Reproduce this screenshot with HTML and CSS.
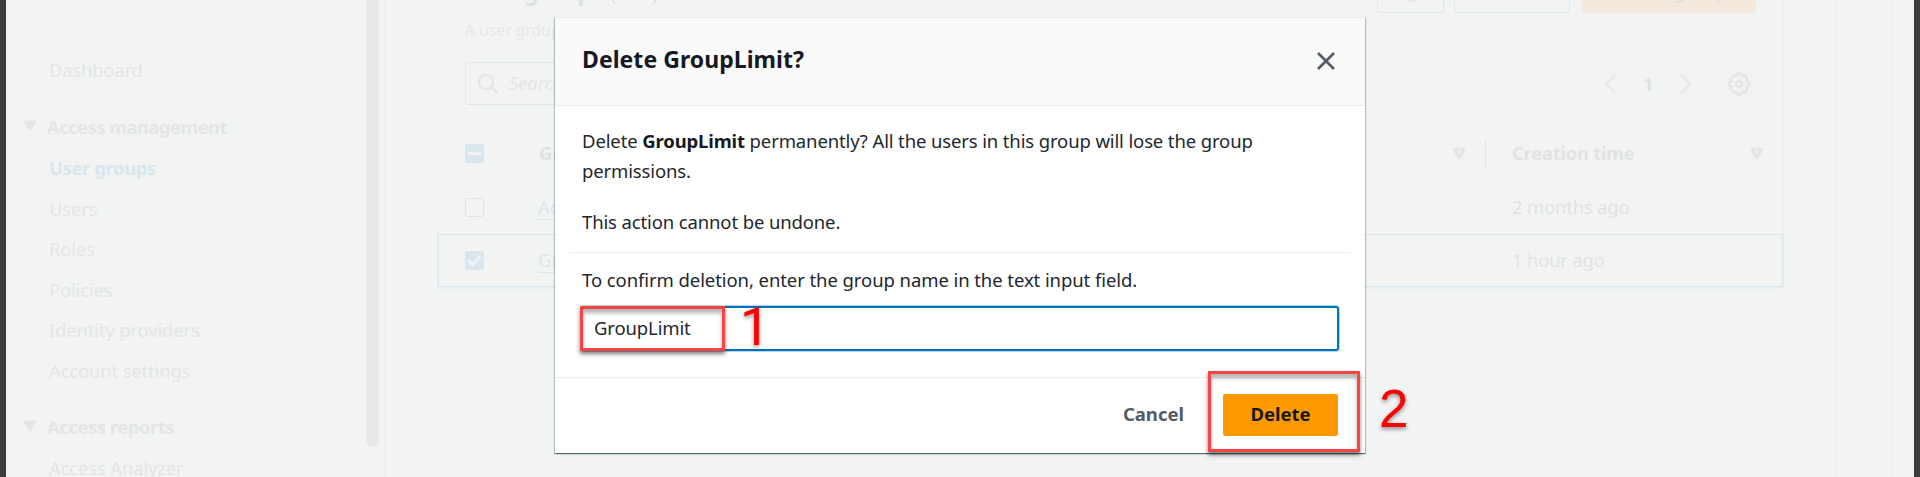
FILE: index.html
```html
<!DOCTYPE html>
<html lang="en">
<head>
<meta charset="utf-8">
<title>Delete GroupLimit?</title>
<link rel="stylesheet" href="styles.css">
</head>
<body>
<div class="app">
  <nav class="sidebar">
    <div class="side-rule"></div>
    <a class="item dash">Dashboard</a>
    <div class="section"><svg width="14" height="12" viewBox="0 0 14 12"><path d="M1.5 1.5h11L7 10z" fill="currentColor" stroke="currentColor" stroke-width="2" stroke-linejoin="round"/></svg><span>Access management</span></div>
    <a class="item active">User groups</a>
    <a class="item">Users</a>
    <a class="item">Roles</a>
    <a class="item">Policies</a>
    <a class="item">Identity providers</a>
    <a class="item">Account settings</a>
    <div class="section second"><svg width="14" height="12" viewBox="0 0 14 12"><path d="M1.5 1.5h11L7 10z" fill="currentColor" stroke="currentColor" stroke-width="2" stroke-linejoin="round"/></svg><span>Access reports</span></div>
    <a class="item">Access Analyzer</a>
  </nav>
  <div class="scroll"><div class="thumb"></div></div>
  <main class="main">
    <section class="card">
      <header class="card-head">
        <div class="card-title">User groups <span>(1/2)</span></div>
        <div class="actions">
          <div class="btn refresh"><svg width="20" height="20" viewBox="0 0 20 20"><circle cx="10" cy="11" r="7" fill="none" stroke="currentColor" stroke-width="3"/></svg></div>
          <div class="btn del">Delete</div>
          <div class="btn create">Create group</div>
        </div>
      </header>
      <div class="desc">A user group is a collection of IAM users.</div>
      <div class="tools">
        <div class="search">
          <svg width="22" height="22" viewBox="0 0 22 22" fill="none" stroke="currentColor" stroke-width="2.6"><circle cx="9" cy="9" r="7.2"/><path d="M14.2 14.2l6 6"/></svg>
          <span>Search</span>
        </div>
        <div class="pager">
          <svg class="chev" width="14" height="22" viewBox="0 0 14 22"><path d="M12 1.5L2.5 11l9.500 9.500" /></svg>
          <b>1</b>
          <svg class="chev" width="14" height="22" viewBox="0 0 14 22"><path d="M2 1.500L11.500 11 2 20.500"/></svg>
          <i class="pager-line"></i>
          <svg class="gear" width="24" height="24" viewBox="0 0 24 24" fill="none" stroke="currentColor" stroke-width="2.800" stroke-linejoin="round"><path d="M10 2h4l1 2.300 2.600-.6 2.600 2.800-.8 2.500 2.400 1.300v3.400l-2.400 1.300.8 2.500-2.600 2.800-2.600-.6-1 2.300h-4l-1-2.300-2.600.6-2.600-2.800.8-2.500-2.400-1.300v-3.400l2.400-1.300-.8-2.500 2.600-2.800 2.600.6z"/><circle cx="12" cy="12" r="3"/></svg>
        </div>
      </div>
      <div class="row thead">
        <div class="c-check"><i class="box on"><svg width="19" height="19"><path d="M3 9.500h13" stroke="#f2f4f3" stroke-width="3"/></svg></i></div>
        <div class="c-name"><span>Group name</span><svg class="sort" width="14" height="13" viewBox="0 0 14 13"><path d="M2 2h10L7 10.500z"/></svg></div>
        <div class="c-time"><span>Creation time</span><svg class="sort" width="14" height="13" viewBox="0 0 14 13"><path d="M2 2h10L7 10.500z"/></svg></div>
      </div>
      <div class="row">
        <div class="c-check"><i class="box"></i></div>
        <div class="c-name"><a>Admins</a></div>
        <div class="c-time"><span>2 months ago</span></div>
      </div>
      <div class="row selected">
        <div class="c-check"><i class="box on"><svg width="19" height="19"><path d="M3.500 9.500l4.300 4.500L15.500 4.500" fill="none" stroke="#f2f4f3" stroke-width="2.800"/></svg></i></div>
        <div class="c-name"><a>GroupLimit</a></div>
        <div class="c-time"><span>1 hour ago</span></div>
      </div>
    </section>
  </main>
  <div class="help"></div>
  <div class="rail"></div>
</div>

<div class="modal">
  <header class="m-head"><h2>Delete GroupLimit?</h2>
    <svg width="20" height="20" viewBox="0 0 20 20"><path d="M2 2l16 16M18 2L2 18" stroke="#545b64" stroke-width="2.600"/></svg>
  </header>
  <div class="m-body">
    <p>Delete <b>GroupLimit</b> permanently? All the users in this group will lose the group<br>permissions.</p>
    <p class="p2">This action cannot be undone.</p>
    <div class="m-rule"></div>
    <p class="p3">To confirm deletion, enter the group name in the text input field.</p>
    <div class="input"><span>GroupLimit</span></div>
  </div>
  <footer class="m-foot"><span class="cancel">Cancel</span><div class="primary"><span>Delete</span></div></footer>
</div>

<div class="mark mark-one"></div>
<div class="num num-one">1</div>
<div class="mark mark-two"></div>
<div class="num num-two">2</div>
</body>
</html>
```
FILE: styles.css
```css
* { box-sizing: border-box; }
body {
  margin: 0;
  width: 1920px;
  height: 477px;
  overflow: hidden;
  position: relative;
  background: #f2f4f3;
  font-family: "Noto Sans", "Open Sans", sans-serif;
  font-size: 18.5px;
  color: #23272d;
  white-space: nowrap;
}
svg { display: block; flex: none; }
h2, p { margin: 0; }

/* dimmed page */
.app {
  display: flex;
  height: 477px;
  border-left: 6px solid #3a3a3a;
  border-right: 6px solid #3a3a3a;
  color: #e3e5e6;
}
.sidebar { width: 360px; height: 477px; overflow: hidden; padding-top: 23px; }
.side-rule { height: 1px; width: 301px; margin: 0 0 25.6px 27px; background: #eff1f1; }
.item { display: block; height: 40.5px; line-height: 40.5px; padding-left: 43px; letter-spacing: -0.18px; }
.dash { margin-bottom: 16.5px; letter-spacing: -0.25px; }
.active { color: #d9e6ee; font-weight: bold; letter-spacing: -0.42px; }
.section {
  display: flex; align-items: center; gap: 10px;
  height: 41.5px; line-height: 41px; padding: 0 0 2px 17px;
  font-weight: bold; letter-spacing: -0.62px;
}
.second { margin-top: 15.5px; letter-spacing: -0.5px; }
.scroll { width: 19px; border-right: 1px solid #ebeded; }
.thumb { width: 13px; height: 447px; background: #e7e9e8; border-radius: 0 0 7px 7px; }
.main { width: 1452px; padding-left: 52px; border-right: 1px solid #ebeeed; background: #f1f4f3; }
.help { width: 55px; border-right: 1px solid #ebeeed; }
.rail { flex: 1; background: #f1f4f3; }

.card { width: 1347px; height: 287px; border: solid #ebeeed; border-width: 0 1px; background: #f2f4f3; }
.card-head { display: flex; justify-content: space-between; align-items: flex-end; height: 13px; padding: 0 27px 0 27px; }
.card-title { font-size: 23px; font-weight: bold; line-height: 30px; margin-bottom: 7px; color: #dfe2e2; }
.card-title span { font-weight: normal; }
.actions { display: flex; align-items: flex-end; font-weight: bold; letter-spacing: -0.3px; }
.btn { height: 42px; line-height: 40px; border: 1px solid #e2e5e5; border-radius: 2px; text-align: center; }
.refresh { width: 67px; margin-right: 10px; padding: 10px 23px; }
.del { width: 116px; margin-right: 11px; }
.create { width: 175px; background: #f3e9dc; border-color: #f3e9dc; color: #dfe0de; }
.desc { height: 49px; line-height: 34px; padding-left: 27px; font-size: 15.5px; letter-spacing: 0.1px; color: #e5e7e7; }
.tools { height: 65px; display: flex; justify-content: space-between; padding: 0 32px 0 27px; border-bottom: 1px solid #eff1f0; }
.search { display: flex; align-items: center; width: 500px; height: 43px; padding-left: 11px; gap: 10px; border: 1px solid #e2e5e5; border-radius: 3px; font-style: italic; color: #e4e6e6; }
.search span { letter-spacing: -0.1px; margin-top: -2px; }
.pager { display: flex; align-items: center; height: 43px; }
.pager b { margin: 0 27px 0 25px; width: 9px; letter-spacing: -1px; line-height: 20px; font-size: 18px; color: #dfe2e2; }
.chev { fill: none; stroke: #e7e9e9; stroke-width: 2.6; }
.pager-line { width: 1px; height: 43px; background: #eff1f0; margin: 0 15px 0 18px; }
.row { display: flex; align-items: center; height: 54px; }
.thead { height: 53px; border-bottom: 1px solid #eff1f0; font-weight: bold; }
.thead span { margin-top: -2px; }
.c-check { width: 73px; padding-left: 27px; }
.c-name { display: flex; align-items: center; justify-content: space-between; width: 975px; height: 27px; padding: 0 19px 0 27px; }
.thead .c-name { border-left: 1px solid #eef0ef; border-right: 1px solid #e0e3e3; color: #dfe2e2; }
.c-time { display: flex; align-items: center; justify-content: space-between; flex: 1; padding: 0 19px 0 26px; letter-spacing: -0.3px; color: #e1e3e3; }
.row:not(.thead) .c-time { padding-bottom: 2px; letter-spacing: -0.22px; }
.row:not(.thead) .c-name { padding-bottom: 1px; }
.c-name a { color: #dbe7ee; border-bottom: 1px solid #dbe7ee; line-height: 25px; }
.sort { fill: none; stroke: #e2e4e5; stroke-width: 3; stroke-linejoin: round; }
.box { display: block; width: 19px; height: 19px; border: 1px solid #e0e3e3; border-radius: 3px; }
.on { border: 0; background: #d9e6ee; }
.selected { height: 53px; border: 1px solid #d9e6ee; box-shadow: 0 1px 2px #dfe8eb; }
.selected .c-check { width: 72px; padding-left: 26px; }

/* dialog */
.modal {
  position: absolute; left: 555px; top: 17px; width: 810px; height: 436px;
  background: #fff; border-top: 1px solid #eaeded;
  box-shadow: 0 1px 1px rgba(0,28,36,.45), 1px 1px 1px rgba(0,28,36,.2), -1px 1px 1px rgba(0,28,36,.2);
}
.m-head { display: flex; justify-content: space-between; height: 88px; padding: 33px 29px 0 27px; background: #fafafa; border-bottom: 1px solid #eaeded; }
.m-head h2 { font-size: 23px; line-height: 16px; letter-spacing: 0.05px; color: #16191f; }
.m-body { padding: 20px 27px 0; height: 271px; line-height: 30px; letter-spacing: -0.13px; }
.m-body b { color: #16191f; }
.p2 { margin-top: 21px; }
.p3 { letter-spacing: -0.08px; }
.m-rule { height: 1px; margin: 15px -13px 12px; background: #eaeded; }
.input { display: flex; align-items: center; width: 758px; height: 45px; margin: 11px 0 0 -1px; padding-left: 11px; border: 2px solid #0073bb; border-radius: 3px; box-shadow: 0 0 0 1px #b5d6ea; }
.input span { margin-top: -1px; }
.m-foot { display: flex; align-items: center; justify-content: flex-end; height: 76px; padding: 0 27px 2px 0; border-top: 1px solid #eaeded; font-weight: bold; }
.cancel { color: #545b64; margin: -2px 39px 0 0; }
.primary { width: 115px; height: 42px; line-height: 40px; text-align: center; background: #f90; border-radius: 2px; color: #16191f; }

/* callouts */
.mark { position: absolute; border: 3px solid #f94444; box-shadow: 0 3px 4px rgba(0,0,0,.5), inset 0 4px 4px rgba(0,0,0,.3); }
.mark-one { left: 580px; top: 306px; width: 145px; height: 45px; }
.mark-two { left: 1208px; top: 371px; width: 152px; height: 81px; }
.num { position: absolute; font: 53px/60px "Liberation Sans", Arial, sans-serif; color: #f00; text-shadow: 0 2px 4px rgba(0,0,0,.45); }
.num-one { left: 740px; top: 297px; font-family: Roboto, sans-serif; }
.num-two { left: 1379px; top: 379px; }
```
